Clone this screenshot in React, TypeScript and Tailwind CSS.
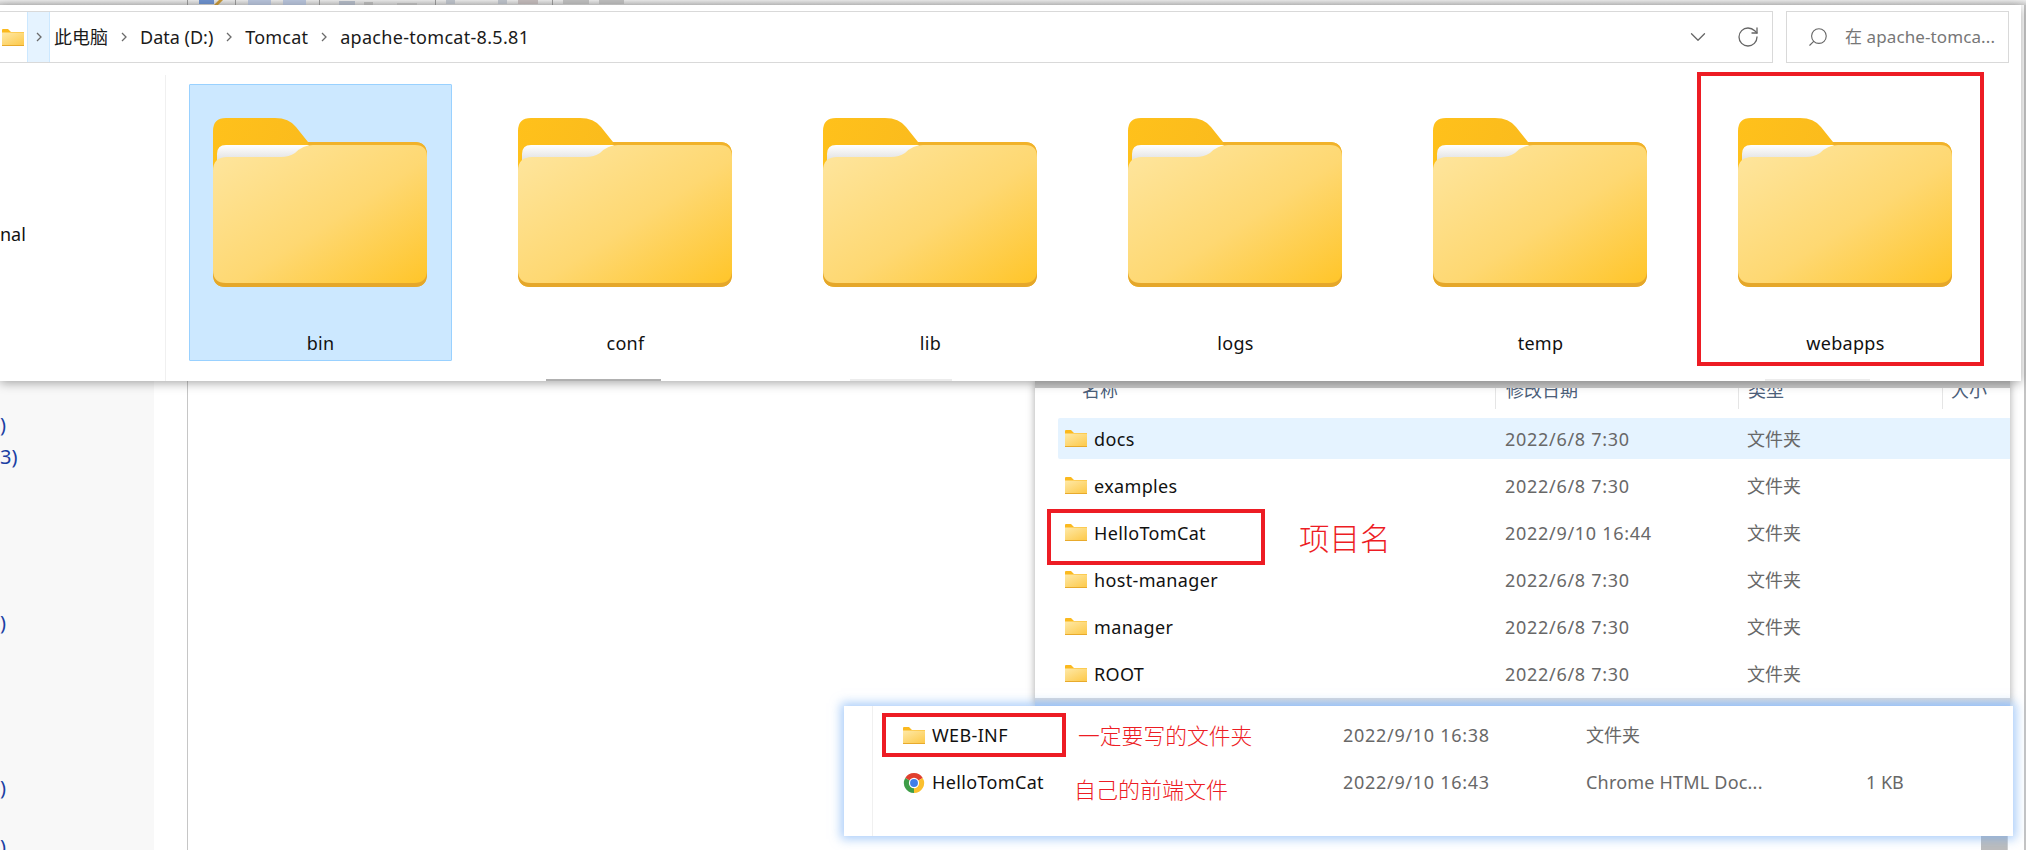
import { ChevronDown, RotateCw, Search } from "lucide-react";

function BigFolder() {
  return (
    <svg width="214" height="169" viewBox="0 0 214 169" className="shrink-0 -ml-[2px]">
      <defs>
        <linearGradient id="bfTab" x1="0" y1="0" x2="1" y2="0.3">
          <stop offset="0" stopColor="#ffc11b" />
          <stop offset="1" stopColor="#f5b41f" />
        </linearGradient>
        <linearGradient id="bfFront" x1="0" y1="0" x2="1" y2="1">
          <stop offset="0" stopColor="#fee6a0" />
          <stop offset="0.55" stopColor="#fed872" />
          <stop offset="1" stopColor="#ffc529" />
        </linearGradient>
        <linearGradient id="bfPaper" x1="0" y1="0" x2="0" y2="1">
          <stop offset="0" stopColor="#ffffff" />
          <stop offset="1" stopColor="#dcdcdc" />
        </linearGradient>
      </defs>
      <path
        d="M0 13 Q0 0 13 0 H62 Q76 0 83 9 L95 24 H201 Q214 24 214 37 V156 Q214 169 201 169 H13 Q0 169 0 156 Z"
        fill="url(#bfTab)"
      />
      <path d="M0 100 V156 Q0 169 13 169 H201 Q214 169 214 156 V100 Z" fill="#e5a72a" />
      <path d="M95 24 H201 Q214 24 214 37 V60 H95 Z" fill="#f1b22a" />
      <path d="M4 45 V36 Q4 27 13 27 H96 L84 45 Z" fill="url(#bfPaper)" />
      <path
        d="M0 53 Q0 39 14 39 H68 Q76 39 82 35 Q90 27 100 27 H202 Q214 27 214 39 V152 Q214 165 201 165 H13 Q0 165 0 152 Z"
        fill="url(#bfFront)"
      />
    </svg>
  );
}

function SmallFolder() {
  return (
    <svg width="22" height="17" viewBox="0 0 22 17" className="shrink-0">
      <defs>
        <linearGradient id="sfBody" x1="0" y1="0" x2="0.8" y2="1">
          <stop offset="0" stopColor="#fee9a8" />
          <stop offset="1" stopColor="#fdcc52" />
        </linearGradient>
      </defs>
      <path d="M0 1 Q0 0 1 0 H6 L9 3 H22 V17 H0 Z" fill="#fbb91e" />
      <rect x="0" y="3.5" width="22" height="12.5" fill="url(#sfBody)" />
      <rect x="0" y="16" width="22" height="1" fill="#e8aa2c" />
    </svg>
  );
}

function ChromeIcon() {
  return (
    <svg width="22" height="22" viewBox="0 0 24 24" className="shrink-0">
      <path d="M12 12 L2.47 6.5 A11 11 0 0 1 21.53 6.5 Z" fill="#e0402f" />
      <path d="M12 12 L21.53 6.5 A11 11 0 0 1 12 23 Z" fill="#fbc02d" />
      <path d="M12 12 L12 23 A11 11 0 0 1 2.47 6.5 Z" fill="#3e9d47" />
      <circle cx="12" cy="12" r="5.6" fill="#ffffff" />
      <circle cx="12" cy="12" r="4.3" fill="#3f7ee8" />
    </svg>
  );
}

function Crumb() {
  return (
    <svg width="6" height="10" viewBox="0 0 6 10" className="shrink-0">
      <path d="M1 1 L5 5 L1 9" fill="none" stroke="#6b6b6b" strokeWidth="1.3" />
    </svg>
  );
}

function ToolbarBits() {
  return (
    <svg width="640" height="5" viewBox="0 0 640 5" className="block">
      <rect x="187" width="1" height="5" fill="#9a9a9a" />
      <rect x="235" width="1" height="5" fill="#9a9a9a" />
      <rect x="319" width="1" height="5" fill="#9a9a9a" />
      <rect x="435" width="1" height="5" fill="#9a9a9a" />
      <rect x="552" width="1" height="5" fill="#9a9a9a" />
      <rect x="199" width="15" height="4" fill="#6f93cf" />
      <path d="M214 5 L219 0 H223 L218 5 Z" fill="#c99a3a" />
      <rect x="248" width="23" height="5" fill="#b9c5dc" />
      <rect x="283" width="23" height="5" fill="#b9c5dc" />
      <rect x="339" y="1" width="16" height="4" fill="#b5bcc8" />
      <rect x="364" y="2" width="9" height="3" fill="#bcbcbc" />
      <rect x="397" y="3" width="20" height="2" fill="#c2c2c2" />
      <rect x="446" width="9" height="4" fill="#bfc4cc" />
      <rect x="498" width="9" height="4" fill="#bfc4cc" />
      <rect x="518" width="20" height="4" fill="#c4bcbc" />
      <rect x="563" width="26" height="4" fill="#c0c0c0" />
      <rect x="599" width="25" height="4" fill="#c0c0c0" />
    </svg>
  );
}

const tiles = ["bin", "conf", "lib", "logs", "temp", "webapps"];

const rows = [
  { name: "docs", date: "2022/6/8 7:30", active: true },
  { name: "examples", date: "2022/6/8 7:30", active: false },
  { name: "HelloTomCat", date: "2022/9/10 16:44", active: false },
  { name: "host-manager", date: "2022/6/8 7:30", active: false },
  { name: "manager", date: "2022/6/8 7:30", active: false },
  { name: "ROOT", date: "2022/6/8 7:30", active: false },
];

export default function App() {
  return (
    <div className="relative w-[2026px] h-[850px] overflow-hidden bg-white font-['Noto_Sans','Noto_Sans_CJK_SC',sans-serif] text-[18px]">
      {/* desktop behind the windows */}
      <div className="flex flex-col h-full">
        <div className="h-[5px] bg-gradient-to-b from-[#ececec] to-[#cfcfcf] overflow-hidden shrink-0">
          <ToolbarBits />
        </div>
        <div className="flex flex-1 min-h-0">
          <div className="w-[154px] bg-[#f8f8f8] text-[20px] leading-[24px] text-[#1b3fa3] shrink-0 pt-[408px]">
            <div>)</div>
            <div className="mt-[8px]">3)</div>
            <div className="mt-[142px]">)</div>
            <div className="mt-[141px]">)</div>
            <div className="mt-[35px]">)</div>
          </div>
          <div className="w-[34px] border-r border-[#c6c6c6] shrink-0" />
          <div className="flex-1" />
          <div className="w-[26px] flex flex-col justify-end shrink-0">
            <div className="h-[20px] bg-[#bcbcbc]" />
          </div>
          <div className="w-[17px] border-l border-[#d0d0d0] shrink-0" />
          <div className="w-[2px] bg-[#c4c4c4] shrink-0" />
        </div>
      </div>

      {/* window 2: webapps list */}
      <div className="absolute left-[1035px] top-[381px] w-[975px] flex flex-col shadow-[0_0_8px_rgba(0,0,0,0.35)]">
        <div className="h-[7px] bg-[#c9c9c9]" />
        <div className="h-[310px] bg-white flex flex-col">
          <div className="h-[21px] flex text-[#4c607a] leading-[24px] shrink-0">
            <div className="w-[461px] pl-[47px] border-r border-[#e5e5e5] overflow-hidden">
              <div className="-mt-[10px]">名称</div>
            </div>
            <div className="w-[243px] pl-[10px] border-r border-[#e5e5e5] overflow-hidden">
              <div className="-mt-[10px]">修改日期</div>
            </div>
            <div className="w-[204px] pl-[9px] border-r border-[#e5e5e5] overflow-hidden">
              <div className="-mt-[10px]">类型</div>
            </div>
            <div className="pl-[8px] overflow-hidden">
              <div className="-mt-[10px]">大小</div>
            </div>
          </div>
          <div className="pl-[23px] pt-[9px] flex flex-col gap-[6px]">
            {rows.map((r) => (
              <div
                key={r.name}
                className={`h-[41px] flex items-center rounded-l-[2px] ${r.active ? "bg-[#e5f3ff]" : ""}`}
              >
                <div className="w-[447px] pl-[7px] flex items-center gap-[7px] text-[#111111] tracking-[0.35px]">
                  <SmallFolder />
                  <span className="pt-[2px]">{r.name}</span>
                </div>
                <div className="w-[242px] pt-[2px] text-[#686868] tracking-[0.7px]">{r.date}</div>
                <div className="pt-[2px] text-[#686868]">文件夹</div>
              </div>
            ))}
          </div>
        </div>
        <div className="h-[8px] bg-gradient-to-b from-[#d8d9dc] to-[#c6d9f3]" />
      </div>

      {/* window 3: project folder */}
      <div className="absolute left-[844px] top-[706px] w-[1169px] h-[130px] bg-white shadow-[0_0_10px_3px_rgba(110,170,245,0.6)] flex">
        <div className="w-[29px] border-r border-[#f0f0f0] shrink-0" />
        <div className="flex-1 pt-[5px] flex flex-col">
          <div className="h-[48px] flex items-center">
            <div className="w-[470px] pl-[30px] flex items-center gap-[7px] text-[#111111] tracking-[0.35px]">
              <SmallFolder />
              <span>WEB-INF</span>
            </div>
            <div className="w-[243px] text-[#686868] tracking-[0.7px]">2022/9/10 16:38</div>
            <div className="text-[#686868]">文件夹</div>
          </div>
          <div className="h-[47px] flex items-center">
            <div className="w-[470px] pl-[30px] flex items-center gap-[7px] text-[#111111] tracking-[0.35px]">
              <ChromeIcon />
              <span>HelloTomCat</span>
            </div>
            <div className="w-[243px] text-[#686868] tracking-[0.7px]">2022/9/10 16:43</div>
            <div className="w-[280px] text-[#686868] tracking-[0.2px]">Chrome HTML Doc...</div>
            <div className="text-[#686868]">1 KB</div>
          </div>
        </div>
      </div>

      {/* window 1: explorer with big icons */}
      <div className="absolute left-0 top-[5px] w-[2021px] h-[376px] bg-white shadow-[0_2px_10px_rgba(0,0,0,0.35)] flex flex-col">
        <div className="mt-[6px] h-[52px] flex shrink-0">
          <div className="w-[1773px] border-y border-r border-[#d9d9d9] flex items-center text-[#1a1a1a]">
            <div className="w-[27px] pl-[2px] flex items-center">
              <SmallFolder />
            </div>
            <div className="w-[23px] h-full bg-[#e5f3ff] border-x border-[#cce8ff] flex items-center justify-center">
              <Crumb />
            </div>
            <span className="ml-[4px]">此电脑</span>
            <span className="mx-[13px]"><Crumb /></span>
            <span>Data (D:)</span>
            <span className="mx-[13px]"><Crumb /></span>
            <span className="tracking-[0.2px]">Tomcat</span>
            <span className="mx-[13px]"><Crumb /></span>
            <span className="tracking-[0.3px]">apache-tomcat-8.5.81</span>
            <div className="ml-auto flex items-center gap-[25px] pr-[12px] text-[#666666]">
              <ChevronDown size={26} strokeWidth={1.2} />
              <RotateCw size={24} strokeWidth={1.3} />
            </div>
          </div>
          <div className="ml-[13px] w-[223px] border border-[#d9d9d9] flex items-center pl-[20px] gap-[16px] text-[17px] text-[#777777]">
            <Search size={22} strokeWidth={1.2} className="-scale-x-100 text-[#666666] shrink-0" />
            <span className="whitespace-nowrap tracking-[0.1px]">在 apache-tomca...</span>
          </div>
        </div>
        <div className="flex flex-1 mt-[12px] min-h-0">
          <div className="w-[166px] border-r border-[#f0f0f0] pt-[147px] leading-[24px] text-[#111111] shrink-0">
            nal
          </div>
          <div className="pl-[23px] pt-[9px] flex gap-[42px]">
            {tiles.map((t, i) => (
              <div
                key={t}
                className={`w-[263px] h-[277px] pt-[33px] flex flex-col items-center border rounded-[1px] text-[#111111] ${
                  i === 0 ? "bg-[#cce8ff] border-[#99d1ff]" : "border-transparent"
                }`}
              >
                <BigFolder />
                <div className="mt-[44px] leading-[24px] tracking-[0.3px]">{t}</div>
              </div>
            ))}
          </div>
        </div>
        <div className="absolute left-[546px] bottom-0 w-[115px] h-[2px] bg-[#b0b0b0]" />
        <div className="absolute left-[850px] bottom-0 w-[102px] h-[2px] bg-[#ececec]" />
        <div className="absolute left-[1765px] bottom-0 w-[105px] h-[2px] bg-[#ececec]" />
        <div className="absolute left-[1697px] top-[67px] w-[287px] h-[294px] border-4 border-[#ed1c24]" />
      </div>

      {/* annotations */}
      <div className="absolute left-[1047px] top-[509px] w-[218px] h-[56px] border-4 border-[#ed1c24]" />
      <div className="absolute left-[882px] top-[713px] w-[184px] h-[44px] border-4 border-[#ed1c24]" />
      <div className="absolute left-[1299px] top-[516px] text-[30.5px] leading-[44px] text-[#ed1c24] font-light">项目名</div>
      <div className="absolute left-[1078px] top-[720px] text-[21.8px] leading-[32px] text-[#ed1c24] font-light whitespace-nowrap">一定要写的文件夹</div>
      <div className="absolute left-[1074px] top-[773px] text-[22px] leading-[32px] text-[#ed1c24] font-light whitespace-nowrap">自己的前端文件</div>
    </div>
  );
}
